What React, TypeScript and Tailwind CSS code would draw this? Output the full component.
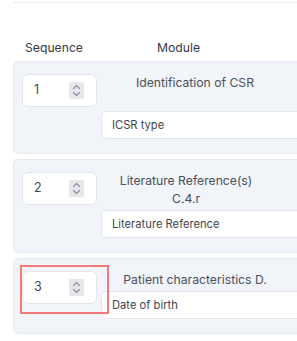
import React from "react";

interface Row {
  seq: number;
  title: string;
  field: string;
  titleClass: string;
  highlight?: boolean;
}

const rows: Row[] = [
  { seq: 1, title: "Identification of CSR", field: "ICSR type", titleClass: "w-[188px] h-[35px]" },
  { seq: 2, title: "Literature Reference(s) C.4.r", field: "Literature Reference", titleClass: "w-[140px] ml-[15px]" },
  { seq: 3, title: "Patient characteristics D.", field: "Date of birth", titleClass: "w-[188px]", highlight: true },
];

function Spinner() {
  return (
    <div className="w-[15px] h-[17px] rounded-[2px] bg-[#e6e7eb] flex items-center justify-center">
      <svg width="9" height="13" viewBox="0 0 9 13" fill="none" stroke="#8b8f98" strokeWidth="1.1" strokeLinecap="round" strokeLinejoin="round">
        <path d="M1.5 4.5 L4.5 1.5 L7.5 4.5" />
        <path d="M1.5 8.5 L4.5 11.5 L7.5 8.5" />
      </svg>
    </div>
  );
}

export default function App() {
  return (
    <div className="w-[297px] h-[341px] overflow-hidden bg-white font-['Inter',sans-serif] text-[#3f4450]">
      <div className="ml-[13px] w-[330px]">
        <div className="mt-[2px] h-px bg-[#e9ebef]" />
        <div className="flex mt-[36px] text-[12.2px] leading-[18px] text-[#353a44]">
          <div className="w-[92px] pl-[12px]">Sequence</div>
          <div className="pl-[52px]">Module</div>
        </div>
        <div className="mt-[4px] flex flex-col gap-[5px]">
          {rows.map((r) => (
            <div
              key={r.seq}
              className="relative flex gap-[4px] rounded-[5px] border border-[#e6e9ee] bg-[#f1f4f8] pl-[8px] pt-[12px] pb-[14px]"
            >
              <div className="w-[75px] h-[33px] rounded-[6px] border border-[#e4e6eb] bg-white flex items-center justify-between pl-[11px] pr-[12px] text-[12.5px]">
                <span>{r.seq}</span>
                <Spinner />
              </div>
              <div className="flex flex-col">
                <div className={`${r.titleClass} text-center text-[12.2px] leading-[18px] text-[#4b505b] mb-[2px]`}>
                  {r.title}
                </div>
                <div className="w-[230px] h-[28px] rounded-[5px] border border-[#e4e6eb] bg-white flex items-center pl-[10px] text-[11.2px] text-[#3f4450]">
                  {r.field}
                </div>
              </div>
              {r.highlight && (
                <div className="absolute left-[6px] top-[6px] w-[89px] h-[49px] border-2 border-[#f47a7a]" />
              )}
            </div>
          ))}
        </div>
      </div>
    </div>
  );
}
